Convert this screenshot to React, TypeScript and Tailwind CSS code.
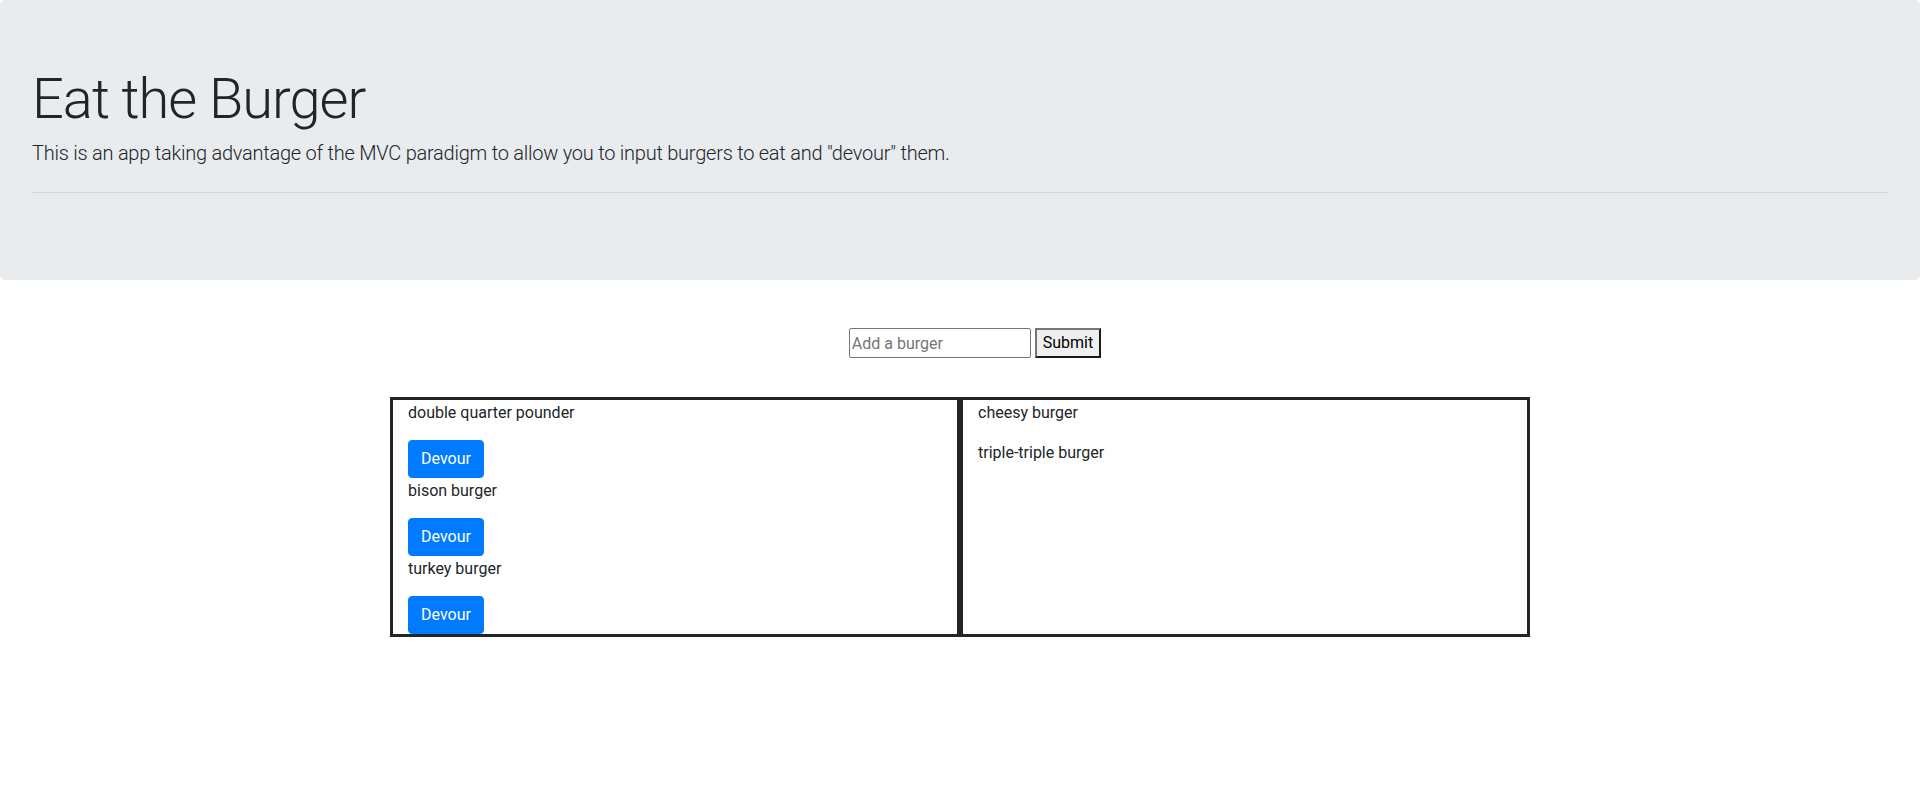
import React, { useState } from 'react';

type Burger = { id: number; name: string; devoured: boolean };

const initialBurgers: Burger[] = [
    { id: 1, name: 'double quarter pounder', devoured: false },
    { id: 2, name: 'bison burger', devoured: false },
    { id: 3, name: 'turkey burger', devoured: false },
    { id: 4, name: 'cheesy burger', devoured: true },
    { id: 5, name: 'triple-triple burger', devoured: true },
];

export default function App() {
    const [burgers, setBurgers] = useState<Burger[]>(initialBurgers);
    const [name, setName] = useState('');

    const addBurger = (e: React.FormEvent) => {
        e.preventDefault();
        if (!name.trim()) return;
        setBurgers([...burgers, { id: Date.now(), name: name.trim(), devoured: false }]);
        setName('');
    };

    const devour = (id: number) => {
        setBurgers(burgers.map(b => (b.id === id ? { ...b, devoured: true } : b)));
    };

    return (
        <div className="min-h-screen bg-white text-[#212529] font-['Roboto','Liberation_Sans',sans-serif] text-base leading-6">
            {/* jumbotron */}
            <header className="bg-[#e9ecef] rounded-[5px] px-8 pt-[66px] pb-[87px]">
                <h1 className="text-[56px] font-light leading-[67.2px] mb-[5px] tracking-[-1px]">Eat the Burger</h1>
                <p className="text-[20px] font-light leading-[30px] tracking-[-0.24px]">
                    This is an app taking advantage of the MVC paradigm to allow you to input burgers to eat and "devour" them.
                </p>
                <hr className="mt-6 border-t border-black/10" />
            </header>

            <form onSubmit={addBurger} className="mt-12 flex justify-center pl-[30px] gap-1">
                <input
                    type="text"
                    value={name}
                    onChange={e => setName(e.target.value)}
                    placeholder="Add a burger"
                    className="w-[182px] h-[30px] border border-[#767676] rounded-[2px] px-[2px] text-base text-black placeholder:text-[#757575] outline-none"
                />
                <button
                    type="submit"
                    className="h-[30px] px-[6px] bg-[#efefef] text-black border-2 border-t-[#767676] border-l-[#767676] border-r-[#1a1a1a] border-b-[#1a1a1a]"
                >
                    Submit
                </button>
            </form>

            <div className="mt-[39px] w-[1140px] mx-auto flex">
                <div className="w-1/2 border-[3px] border-[#212529] px-[15px]">
                    {burgers.filter(b => !b.devoured).map(b => (
                        <div key={b.id}>
                            <p className="h-6 pt-px mb-4">{b.name}</p>
                            <button
                                onClick={() => devour(b.id)}
                                className="block bg-[#007bff] text-white border border-[#007bff] rounded px-3 py-[6px] leading-6"
                            >
                                Devour
                            </button>
                        </div>
                    ))}
                </div>
                <div className="w-1/2 border-[3px] border-[#212529] px-[15px]">
                    {burgers.filter(b => b.devoured).map(b => (
                        <p key={b.id} className="h-6 pt-px mb-4">{b.name}</p>
                    ))}
                </div>
            </div>
        </div>
    );
}
